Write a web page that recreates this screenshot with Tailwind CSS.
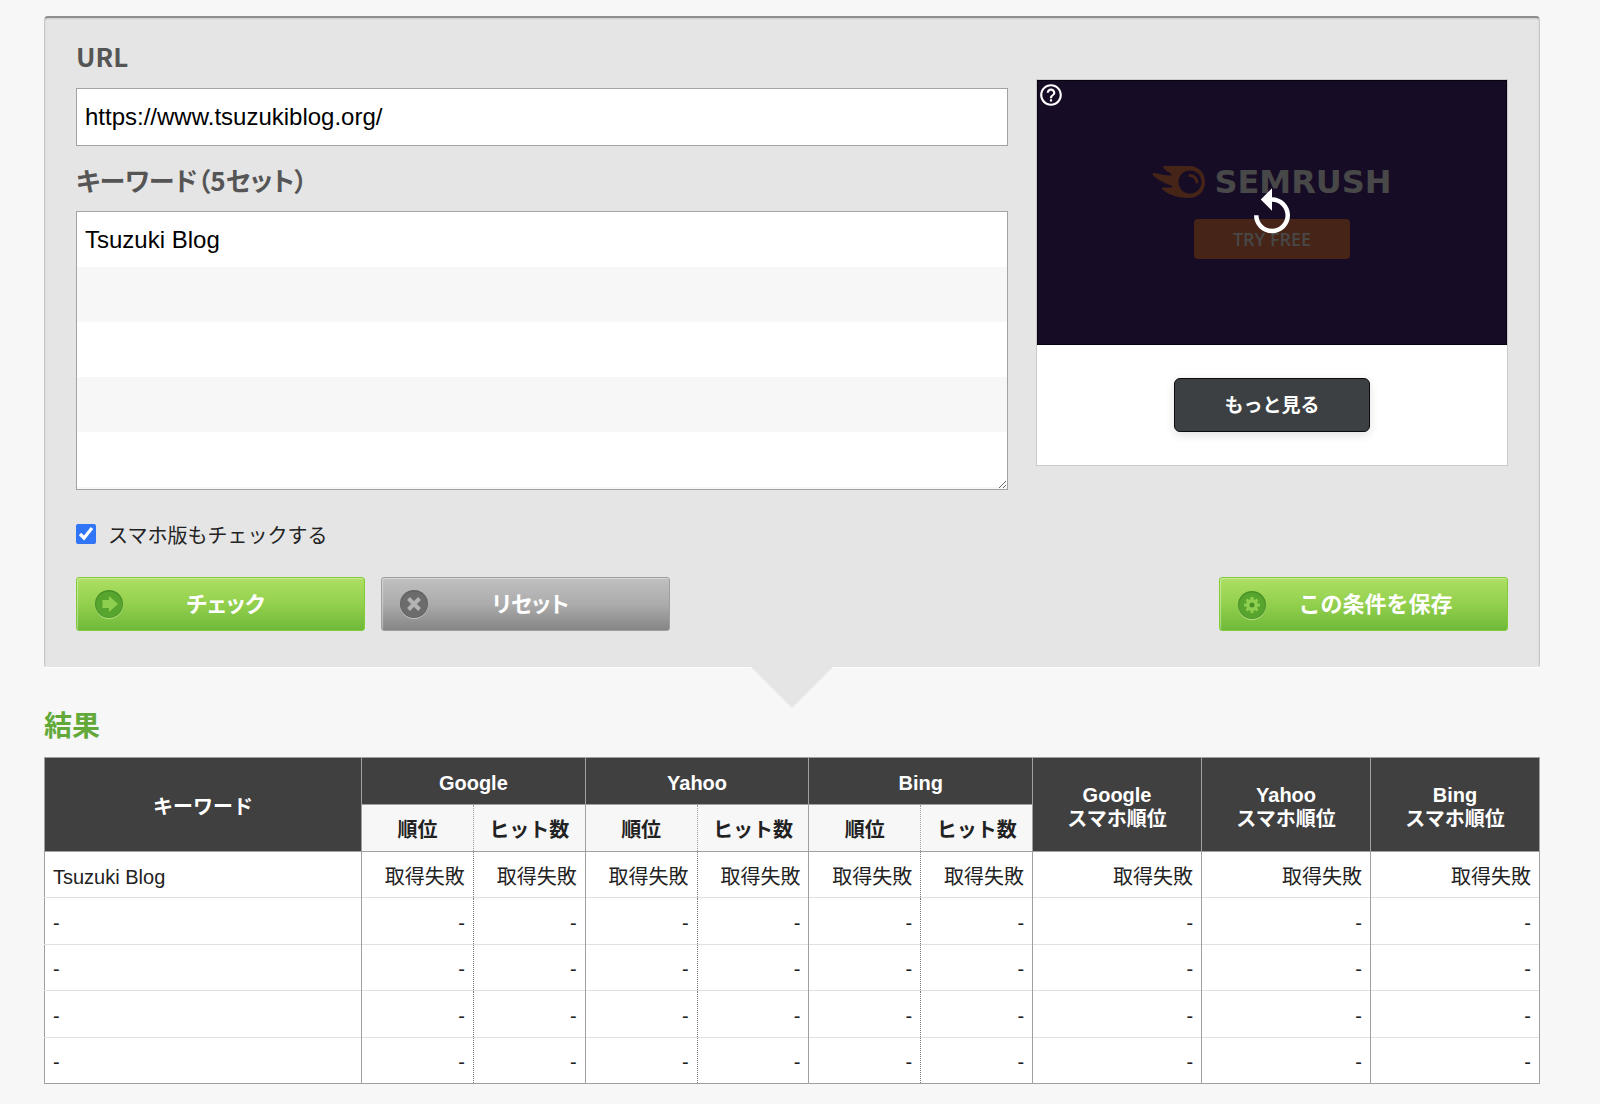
<!DOCTYPE html>
<html lang="ja">
<head>
<meta charset="utf-8">
<meta name="viewport" content="width=device-width, initial-scale=1">
<title>検索順位チェック</title>
<script src="https://cdn.jsdelivr.net/npm/@tailwindcss/browser@4"></script>
</head>
<body class="min-h-screen bg-[#f7f7f7] pt-4 pr-15 pb-5 pl-11 font-['Liberation_Sans','Noto_Sans_CJK_JP',sans-serif] text-xl text-[#222]">

<form class="relative rounded-sm border border-t-2 border-[#c6c6c6] border-t-[#8e8e8e] border-b-white bg-[#e5e5e5] pt-[18px] pr-[31px] pb-9 pl-[31px] shadow-[inset_0_1px_2px_rgba(0,0,0,0.12)]">
  <div class="flex items-start gap-7">
    <div class="min-w-0 flex-1">
      <label for="url" class="mb-3 block h-10 font-['Noto_Sans_CJK_JP',sans-serif] text-[26px] leading-10 font-bold text-[#555]">URL</label>
      <input id="url" type="text" value="https://www.tsuzukiblog.org/" class="mb-3.5 block h-[58px] w-full border border-[#a3a3a3] bg-white px-2 text-2xl text-black">
      <label for="keywords" class="mb-[11px] block h-10 font-['Noto_Sans_CJK_JP',sans-serif] text-[26px] leading-10 font-bold text-[#555] [font-feature-settings:'palt']">キーワード（5セット）</label>
      <textarea id="keywords" rows="5" class="block h-[279px] w-full resize overflow-hidden border border-[#a3a3a3] bg-[repeating-linear-gradient(#fff_0px,#fff_55px,#f7f7f7_55px,#f7f7f7_110px)] px-2 text-2xl leading-[55px] text-black">Tsuzuki Blog</textarea>
    </div>

    <aside class="mt-[43px] w-[472px] shrink-0 border border-[#cacaca] bg-white">
      <div class="relative flex h-[265px] flex-col items-center border border-[#06030f] bg-[#160c26] pt-[84px]">
        <div class="flex h-[34px] items-center gap-2 text-[#484848]">
          <svg class="h-[34px] w-[54px]" viewBox="0 0 54 34" fill="none">
            <path d="M12 1H37C47 1 53 8 53 17C53 27 46 33 36 33C27 33 16 30 10 24Q9 22.500 11 22.500H19C21 22.500 21 21.500 19 20.500C12 18 4 14 .5 9.500Q0 8 2 8C8 9 14 10.500 18 10.500C20 10.500 20 9 18 8C14 6 12 4 11 2Q11 1 12 1Z" fill="#462417"/>
            <circle cx="38" cy="17" r="11.500" fill="#160c26"/>
            <path d="M38 10.500Q44 11 45 17" stroke="#462417" stroke-width="3" stroke-linecap="round"/>
          </svg>
          <span class="font-['DejaVu_Sans',sans-serif] text-[32px] leading-8 font-bold">SEMRUSH</span>
        </div>
        <a href="#" class="mt-5 flex h-10 w-[156px] items-center justify-center rounded bg-[#462417] font-['Open_Sans',sans-serif] text-lg font-semibold text-[#484848]">TRY FREE</a>
        <button type="button" aria-label="もう一度再生" class="absolute inset-0 flex items-center justify-center">
          <svg class="size-[54px]" viewBox="0 0 24 24" fill="#fff"><path d="M12 5V1L7 6l5 5V7c3.310 0 6 2.690 6 6s-2.690 6-6 6-6-2.690-6-6H4c0 4.420 3.580 8 8 8s8-3.580 8-8-3.580-8-8-8z"/></svg>
        </button>
        <button type="button" aria-label="この広告について" class="absolute top-px left-0">
          <svg class="size-[26px]" viewBox="0 0 24 24" fill="#fff"><path d="M11 18h2v-2h-2v2zm1-16C6.480 2 2 6.480 2 12s4.480 10 10 10 10-4.480 10-10S17.520 2 12 2zm0 18c-4.410 0-8-3.590-8-8s3.590-8 8-8 8 3.590 8 8-3.590 8-8 8zm0-14c-2.210 0-4 1.790-4 4h2c0-1.100.9-2 2-2s2 .9 2 2c0 2-3 1.750-3 5h2c0-2.250 3-2.500 3-5 0-2.210-1.790-4-4-4z"/></svg>
        </button>
      </div>
      <div class="flex h-[120px] items-center justify-center">
        <button type="button" class="h-[54px] w-[196px] rounded-md border border-[#0b0c10] bg-[#3c4043] pb-0.5 font-['Noto_Sans_CJK_JP',sans-serif] text-[19px] font-bold text-white shadow-[0_3px_10px_rgba(0,0,0,0.12)]">もっと見る</button>
      </div>
    </aside>
  </div>

  <div class="mt-[31px] flex h-[30px] items-center gap-3">
    <input id="mobile" type="checkbox" checked class="mb-1 size-5 accent-[#2f75f6]">
    <label for="mobile">スマホ版もチェックする</label>
  </div>

  <div class="mt-[26px] flex gap-4 font-['Noto_Sans_CJK_JP',sans-serif] text-[22px] font-bold text-white [text-shadow:1px_2px_2px_rgba(0,0,0,0.35)]">
    <button type="submit" class="relative h-[54px] w-[289px] rounded-[3px] border border-[#82cc35] bg-linear-to-b from-[#addf63] via-[#93d04d] to-[#6fb93a] pb-1 pl-2.5 shadow-[inset_1px_1px_1px_rgba(255,255,255,0.4)] [font-feature-settings:'palt']">
      <svg class="absolute top-[11px] left-[17px] size-[30px]" viewBox="0 0 30 30"><circle cx="15" cy="16" r="14" fill="#b5e084"/><circle cx="15" cy="15" r="14" fill="#479126"/><circle cx="15" cy="15.500" r="13" fill="#57a52e"/><path d="M8.500 11H15V7L24 15L15 23V19H8.500Z" fill="#8fcf50"/></svg>
      チェック
    </button>
    <button type="reset" class="relative h-[54px] w-[289px] rounded-[3px] border border-[#9f9f9f] bg-linear-to-b from-[#c0c0c0] via-[#acacac] to-[#858585] pb-1 pl-2.5 shadow-[inset_1px_1px_1px_rgba(255,255,255,0.4)] [font-feature-settings:'palt']">
      <svg class="absolute top-[11px] left-[17px] size-[30px]" viewBox="0 0 30 30"><circle cx="15" cy="16" r="14" fill="#c4c4c4"/><circle cx="15" cy="15" r="14" fill="#606060"/><circle cx="15" cy="15.500" r="13" fill="#6c6c6c"/><path d="M9.500 9.500L20.500 20.500M20.500 9.500L9.500 20.500" stroke="#b4b4b4" stroke-width="4"/></svg>
      リセット
    </button>
    <button type="button" class="relative ml-auto h-[54px] w-[289px] rounded-[3px] border border-[#82cc35] bg-linear-to-b from-[#addf63] via-[#93d04d] to-[#6fb93a] pb-1 pl-6 shadow-[inset_1px_1px_1px_rgba(255,255,255,0.4)]">
      <svg class="absolute top-3 left-[17px] size-[30px]" viewBox="0 0 30 30"><circle cx="15" cy="16" r="14" fill="#b5e084"/><circle cx="15" cy="15" r="14" fill="#479126"/><circle cx="15" cy="15.500" r="13" fill="#57a52e"/><g stroke="#8fcf50" stroke-width="3"><path d="M15 7V23M7 15H23M9.500 9.500L20.500 20.500M20.500 9.500L9.500 20.500"/></g><circle cx="15" cy="15" r="6" fill="#8fcf50"/><circle cx="15" cy="15" r="2.500" fill="#479126"/></svg>
      この条件を保存
    </button>
  </div>

  <svg class="absolute top-full left-1/2 h-[41px] w-[82px] -translate-x-1/2" viewBox="0 0 82 41"><path d="M0 0H82L41 41Z" fill="#e5e5e5"/></svg>
</form>

<h2 class="mt-9 mb-[13px] h-10 font-['Noto_Sans_CJK_JP',sans-serif] text-[28px] leading-10 font-bold text-[#62a93a]">結果</h2>

<table class="w-full table-fixed border-collapse border border-[#a0a0a0] bg-white text-right leading-6 [&_thead_tr]:h-[47px] [&_tbody_tr]:h-[46px] h-[327px] [&_tbody_td]:border-r [&_tbody_td]:border-r-[#a0a0a0] [&_tbody_td]:border-t [&_tbody_td]:border-t-[#e0e0e0] [&_td]:px-2 [&_td]:pt-1 [&_th]:pt-1 [&_tbody_td:nth-child(1)]:text-left [&_tbody_td:nth-child(2)]:border-r-[#777] [&_tbody_td:nth-child(2)]:[border-right-style:dotted] [&_tbody_td:nth-child(4)]:border-r-[#777] [&_tbody_td:nth-child(4)]:[border-right-style:dotted] [&_tbody_td:nth-child(6)]:border-r-[#777] [&_tbody_td:nth-child(6)]:[border-right-style:dotted]">
  <colgroup>
    <col class="w-[21.2%]"><col span="6" class="w-[7.48%]"><col span="3" class="w-[11.3%]">
  </colgroup>
  <thead class="text-center [&_th]:border [&_th]:border-[#a0a0a0] [&_th]:font-bold">
    <tr class="bg-[#404040] text-white">
      <th scope="col" rowspan="2">キーワード</th>
      <th scope="colgroup" colspan="2">Google</th>
      <th scope="colgroup" colspan="2">Yahoo</th>
      <th scope="colgroup" colspan="2">Bing</th>
      <th scope="col" rowspan="2">Google<br>スマホ順位</th>
      <th scope="col" rowspan="2">Yahoo<br>スマホ順位</th>
      <th scope="col" rowspan="2">Bing<br>スマホ順位</th>
    </tr>
    <tr class="bg-[#f7f7f7] [&_th:nth-child(even)]:[border-left-style:dotted] [&_th:nth-child(odd)]:[border-right-style:dotted]">
      <th scope="col">順位</th><th scope="col">ヒット数</th>
      <th scope="col">順位</th><th scope="col">ヒット数</th>
      <th scope="col">順位</th><th scope="col">ヒット数</th>
    </tr>
  </thead>
  <tbody>
    <tr class="[&_td]:border-t-[#a0a0a0]!"><td>Tsuzuki Blog</td><td>取得失敗</td><td>取得失敗</td><td>取得失敗</td><td>取得失敗</td><td>取得失敗</td><td>取得失敗</td><td>取得失敗</td><td>取得失敗</td><td>取得失敗</td></tr>
    <tr><td>-</td><td>-</td><td>-</td><td>-</td><td>-</td><td>-</td><td>-</td><td>-</td><td>-</td><td>-</td></tr>
    <tr><td>-</td><td>-</td><td>-</td><td>-</td><td>-</td><td>-</td><td>-</td><td>-</td><td>-</td><td>-</td></tr>
    <tr><td>-</td><td>-</td><td>-</td><td>-</td><td>-</td><td>-</td><td>-</td><td>-</td><td>-</td><td>-</td></tr>
    <tr><td>-</td><td>-</td><td>-</td><td>-</td><td>-</td><td>-</td><td>-</td><td>-</td><td>-</td><td>-</td></tr>
  </tbody>
</table>

</body>
</html>
